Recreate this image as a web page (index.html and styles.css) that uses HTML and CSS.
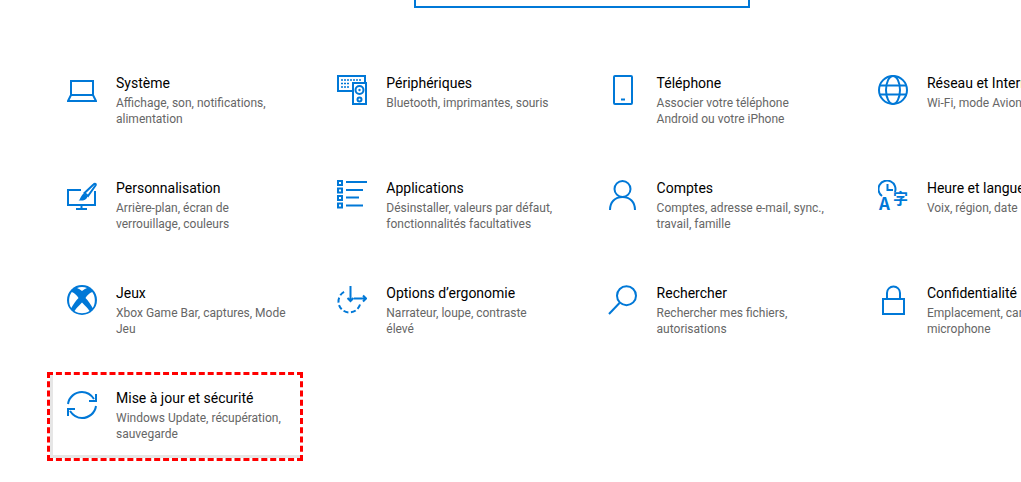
FILE: index.html
```html
<!DOCTYPE html>
<html lang="fr">
<head>
    <meta charset="UTF-8">
    <meta name="viewport" content="width=device-width, initial-scale=1.0">
    <title>Paramètres</title>
    <link rel="stylesheet" href="styles.css">
</head>
<body>
    <div class="search-box"></div>

    <div class="tiles">
        <div class="tile">
            <svg class="icon" viewBox="0 0 30 30"><path d="M4 20V6h22v14M1 26l3-6h22l3 6z"/></svg>
            <div class="tile-text">
                <h3>Système</h3>
                <p>Affichage, son, notifications, alimentation</p>
            </div>
        </div>
        <div class="tile">
            <svg class="icon" viewBox="0 0 30 30">
                <path d="M15 16H1V1h27v6"/>
                <rect x="16" y="8" width="13" height="21"/>
                <circle cx="22.5" cy="15" r="4"/>
                <circle cx="22.5" cy="24.5" r="2"/>
                <path class="thin" d="M4 5h21M4 8.500h9M4 12h9" stroke-dasharray="2 1"/>
                <circle class="solid" cx="22.5" cy="15" r="1.2"/>
            </svg>
            <div class="tile-text">
                <h3>Périphériques</h3>
                <p>Bluetooth, imprimantes, souris</p>
            </div>
        </div>
        <div class="tile">
            <svg class="icon" viewBox="0 0 30 30">
                <rect x="6" y="1" width="18" height="28" rx="1"/>
                <path d="M13 24.500h4"/>
            </svg>
            <div class="tile-text">
                <h3>Téléphone</h3>
                <p>Associer votre téléphone Android ou votre iPhone</p>
            </div>
        </div>
        <div class="tile">
            <svg class="icon" viewBox="0 0 30 30">
                <circle cx="15" cy="15" r="14"/>
                <ellipse cx="15" cy="15" rx="7" ry="14"/>
                <path d="M2 10.500h26M2 19.500h26"/>
            </svg>
            <div class="tile-text">
                <h3>Réseau et Internet</h3>
                <p>Wi-Fi, mode Avion, VPN</p>
            </div>
        </div>

        <div class="tile">
            <svg class="icon" viewBox="0 0 30 30">
                <path d="M14 10H1v15h27V11M14.500 25v4M9 29h11"/>
                <path d="M26.500 4.500c1.500-1.500 3-.5 2 1L21 16l-3.500-3z"/>
                <path class="solid" d="M17 13.500l3.500 3c-1 3.500-4.500 4.500-9 4 2-1 2.500-6 5.500-7z"/>
            </svg>
            <div class="tile-text">
                <h3>Personnalisation</h3>
                <p>Arrière-plan, écran de verrouillage, couleurs</p>
            </div>
        </div>
        <div class="tile">
            <svg class="icon" viewBox="0 0 30 30">
                <path d="M9 2h21M9 10h17M9 17.500h13M9 25.500h17"/>
                <rect x="1" y="1" width="4" height="4"/>
                <rect x="1" y="8.500" width="4" height="4"/>
                <rect x="1" y="16" width="4" height="4"/>
                <rect x="1" y="23.500" width="4" height="4"/>
            </svg>
            <div class="tile-text">
                <h3>Applications</h3>
                <p>Désinstaller, valeurs par défaut, fonctionnalités facultatives</p>
            </div>
        </div>
        <div class="tile">
            <svg class="icon" viewBox="0 0 30 30">
                <circle cx="14.500" cy="9" r="8"/>
                <path d="M2 30c0-8 5-13 12.500-13S27 22 27 30"/>
            </svg>
            <div class="tile-text">
                <h3>Comptes</h3>
                <p>Comptes, adresse e-mail, sync., travail, famille</p>
            </div>
        </div>
        <div class="tile">
            <svg class="icon" viewBox="0 0 30 30">
                <path d="M4 16a8.500 8.500 0 1 1 13-4M9.500 4v6H15"/>
                <text class="glyph" x="1" y="29.500" font-size="17">A</text>
                <text class="glyph" x="15" y="24" font-size="15">字</text>
            </svg>
            <div class="tile-text">
                <h3>Heure et langue</h3>
                <p>Voix, région, date</p>
            </div>
        </div>

        <div class="tile">
            <svg class="icon" viewBox="0 0 30 30">
                <circle class="solid" cx="15" cy="15" r="15"/>
                <g class="knockout">
                    <path d="M10 3c1.700-.7 3.300-1 5-1s3.300.3 5 1c-1.800.6-3.400 1.700-5 3-1.600-1.300-3.200-2.400-5-3z"/>
                    <path d="M4.800 7c3 1.200 5 3.200 6.700 6-3 3-5 6-7.200 10C1.200 18.500 1.500 11 4.800 7z"/>
                    <path d="M25.200 7c-3 1.200-5 3.200-6.700 6 3 3 5 6 7.200 10C28.800 18.500 28.500 11 25.200 7z"/>
                    <path d="M7.500 26c2-3 4.500-5.500 7.500-8.500 3 3 5.500 5.500 7.500 8.500-4.500 3-10.500 3-15 0z"/>
                </g>
            </svg>
            <div class="tile-text">
                <h3>Jeux</h3>
                <p>Xbox Game Bar, captures, Mode Jeu</p>
            </div>
        </div>
        <div class="tile">
            <svg class="icon" viewBox="0 0 30 30">
                <path d="M23 19.500A11 11 0 1 1 9 6" stroke-dasharray="5 2.500"/>
                <path d="M13.500 1v15M10.500 13l3 3 3-3M17 13.500h12M26 10.500l3 3-3 3"/>
            </svg>
            <div class="tile-text">
                <h3>Options d’ergonomie</h3>
                <p>Narrateur, loupe, contraste<br>élevé</p>
            </div>
        </div>
        <div class="tile">
            <svg class="icon" viewBox="0 0 30 30">
                <circle cx="18.500" cy="10.700" r="9.500"/>
                <path d="M11.500 18L1 29"/>
            </svg>
            <div class="tile-text">
                <h3>Rechercher</h3>
                <p>Rechercher mes fichiers, autorisations</p>
            </div>
        </div>
        <div class="tile">
            <svg class="icon" viewBox="0 0 30 30">
                <rect x="5" y="14" width="21" height="15"/>
                <path d="M9 14V8a6.500 6.500 0 0 1 13 0v6"/>
            </svg>
            <div class="tile-text">
                <h3>Confidentialité</h3>
                <p>Emplacement, caméra, microphone</p>
            </div>
        </div>

        <div class="tile tile-marked">
            <svg class="icon" viewBox="0 0 30 30">
                <path d="M1 14C2 7 8 2 15 2c5 0 9 2.500 12 7"/>
                <path d="M29 4v7h-7"/>
                <path d="M29 16c-1 7-7 12-14 12-5 0-9-2.500-12-7"/>
                <path d="M1 26v-7h7"/>
            </svg>
            <div class="tile-text">
                <h3>Mise à jour et sécurité</h3>
                <p>Windows Update, récupération, sauvegarde</p>
            </div>
        </div>
    </div>
</body>
</html>
```

FILE: styles.css
```css
html, body {
    overflow: hidden;
}
body {
    margin: 0;
    height: 482px;
    background: white;
    font-family: Roboto, sans-serif;
}
.search-box {
    width: 332px;
    height: 6px;
    margin-left: 414px;
    border: 2px solid #0078d7;
    border-top: none;
}
.tiles {
    display: grid;
    grid-template-columns: repeat(4, 256px);
    grid-auto-rows: 85px;
    column-gap: 14.3px;
    row-gap: 20px;
    margin-top: 52px;
    margin-left: 50px;
}
.tile {
    position: relative;
    display: flex;
    gap: 19px;
    padding: 15px 0 0 17px;
}
.tile-marked::after {
    content: "";
    position: absolute;
    top: -3px;
    left: -3px;
    width: 250px;
    height: 83px;
    border: 3px dashed #f00;
    box-shadow: inset 3px -3px 0 #e6e6e6;
}
.icon {
    flex: none;
    width: 30px;
    height: 30px;
    fill: none;
    stroke: #0078d7;
    stroke-width: 2;
}
.icon .thin {
    stroke-width: 1.5;
}
.icon .solid {
    fill: #0078d7;
    stroke: none;
}
.icon .knockout {
    fill: white;
    stroke: none;
}
.icon .glyph {
    fill: #0078d7;
    stroke: none;
    font-family: "Noto Sans CJK SC", "Noto Sans", sans-serif;
    font-weight: bold;
}
.tile-text {
    width: 174px;
    flex: none;
    margin-top: -2px;
}
h3 {
    margin: 0 0 2px;
    font-size: 14px;
    font-weight: normal;
    line-height: 20px;
    color: #000;
    white-space: nowrap;
}
p {
    margin: 0;
    font-size: 12px;
    line-height: 16px;
    color: #666;
}
```
